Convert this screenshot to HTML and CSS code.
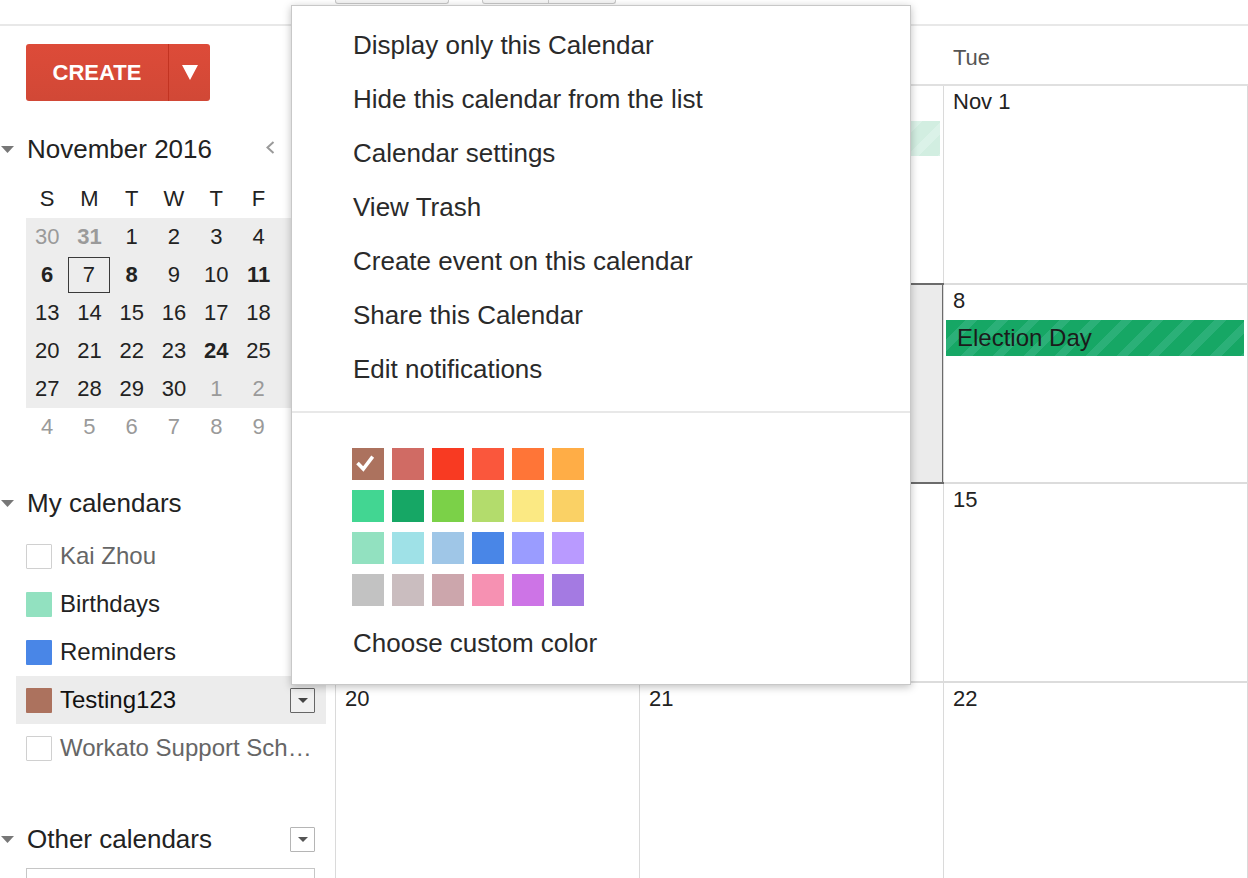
FILE: index.html
```html
<!DOCTYPE html>
<html lang="en">
<head>
<meta charset="utf-8">
<title>Calendar</title>
<link rel="stylesheet" href="styles.css">
</head>
<body>
<div class="app">
  <div class="topbar">
    <div class="tb-btn tb-b1"></div>
    <div class="tb-group"><div class="tb-btn tb-b2"></div><div class="tb-btn tb-b3"></div></div>
  </div>
  <div class="main">
    <aside class="sidebar">
      <div class="create-wrap">
        <div class="create-btn">
          <span class="create-label">CREATE</span>
          <span class="create-arrow"><svg width="16" height="15" viewBox="0 0 16 15"><path d="M0 0H16L8 15Z" fill="#fff"/></svg></span>
        </div>
      </div>

      <div class="minical">
        <div class="sec-head">
          <span class="toggle"><svg width="13" height="7" viewBox="0 0 13 7"><path d="M0 0H13L6.5 7Z" fill="#777"/></svg></span>
          <span class="sec-title">November 2016</span>
          <span class="chev"><svg width="9" height="13" viewBox="0 0 9 13"><polyline points="7.5,1 1.5,6.5 7.5,12" fill="none" stroke="#9a9a9a" stroke-width="2"/></svg></span>
        </div>
        <div class="mc-grid mc-dow">
          <span>S</span><span>M</span><span>T</span><span>W</span><span>T</span><span>F</span><span></span>
        </div>
        <div class="mc-grid mc-month">
          <span class="o">30</span><span class="o b">31</span><span>1</span><span>2</span><span>3</span><span>4</span><span></span>
          <span class="b">6</span><span class="today">7</span><span class="b">8</span><span>9</span><span>10</span><span class="b">11</span><span></span>
          <span>13</span><span>14</span><span>15</span><span>16</span><span>17</span><span>18</span><span></span>
          <span>20</span><span>21</span><span>22</span><span>23</span><span class="b">24</span><span>25</span><span></span>
          <span>27</span><span>28</span><span>29</span><span>30</span><span class="o">1</span><span class="o">2</span><span></span>
        </div>
        <div class="mc-grid mc-next">
          <span class="o">4</span><span class="o">5</span><span class="o">6</span><span class="o">7</span><span class="o">8</span><span class="o">9</span><span></span>
        </div>
      </div>

      <div class="mycal">
        <div class="sec-head">
          <span class="toggle"><svg width="13" height="7" viewBox="0 0 13 7"><path d="M0 0H13L6.5 7Z" fill="#777"/></svg></span>
          <span class="sec-title">My calendars</span>
        </div>
        <div class="cal-list">
          <div class="cal-item off"><span class="swatch empty"></span><span class="cal-name">Kai Zhou</span></div>
          <div class="cal-item"><span class="swatch c-bday"></span><span class="cal-name">Birthdays</span></div>
          <div class="cal-item"><span class="swatch c-rem"></span><span class="cal-name">Reminders</span></div>
          <div class="cal-item active"><span class="swatch c-test"></span><span class="cal-name">Testing123</span>
            <span class="dd dd-dark"><svg width="10" height="5" viewBox="0 0 10 5"><path d="M0 0H10L5 5Z" fill="#444"/></svg></span>
          </div>
          <div class="cal-item off"><span class="swatch empty"></span><span class="cal-name">Workato Support Sch…</span></div>
        </div>
      </div>

      <div class="othercal">
        <div class="sec-head other-head">
          <span class="toggle"><svg width="13" height="7" viewBox="0 0 13 7"><path d="M0 0H13L6.5 7Z" fill="#777"/></svg></span>
          <span class="sec-title">Other calendars</span>
          <span class="dd dd-light"><svg width="10" height="5" viewBox="0 0 10 5"><path d="M0 0H10L5 5Z" fill="#555"/></svg></span>
        </div>
        <div class="add-input"></div>
      </div>
    </aside>

    <section class="calendar">
      <div class="cal-head">
        <div class="hcell"></div><div class="hcell"></div><div class="hcell">Tue</div><div class="hcell"></div>
      </div>
      <div class="week">
        <div class="cell"></div>
        <div class="cell"><div class="date"></div><div class="ev ev-past"></div></div>
        <div class="cell"><div class="date">Nov 1</div></div>
        <div class="cell"></div>
      </div>
      <div class="week">
        <div class="cell"></div>
        <div class="cell today"></div>
        <div class="cell"><div class="date">8</div><div class="ev ev-green">Election Day</div></div>
        <div class="cell"></div>
      </div>
      <div class="week">
        <div class="cell"></div>
        <div class="cell"></div>
        <div class="cell"><div class="date">15</div></div>
        <div class="cell"></div>
      </div>
      <div class="week">
        <div class="cell"><div class="date">20</div></div>
        <div class="cell"><div class="date">21</div></div>
        <div class="cell"><div class="date">22</div></div>
        <div class="cell"></div>
      </div>
    </section>
  </div>

  <div class="popup">
    <ul class="menu">
      <li>Display only this Calendar</li>
      <li>Hide this calendar from the list</li>
      <li>Calendar settings</li>
      <li>View Trash</li>
      <li>Create event on this calendar</li>
      <li>Share this Calendar</li>
      <li>Edit notifications</li>
    </ul>
    <div class="sep"></div>
    <div class="palette">
      <span class="sw sel" style="background:#ac725e"><svg width="32" height="32" viewBox="0 0 32 32"><polyline points="5.5,15 11.3,21 20.7,8.7" fill="none" stroke="#fff" stroke-width="3.6"/></svg></span>
      <span class="sw" style="background:#d06b64"></span>
      <span class="sw" style="background:#f83a22"></span>
      <span class="sw" style="background:#fa573c"></span>
      <span class="sw" style="background:#ff7537"></span>
      <span class="sw" style="background:#ffad46"></span>
      <span class="sw" style="background:#42d692"></span>
      <span class="sw" style="background:#16a765"></span>
      <span class="sw" style="background:#7bd148"></span>
      <span class="sw" style="background:#b3dc6c"></span>
      <span class="sw" style="background:#fbe983"></span>
      <span class="sw" style="background:#fad165"></span>
      <span class="sw" style="background:#92e1c0"></span>
      <span class="sw" style="background:#9fe1e7"></span>
      <span class="sw" style="background:#9fc6e7"></span>
      <span class="sw" style="background:#4986e7"></span>
      <span class="sw" style="background:#9a9cff"></span>
      <span class="sw" style="background:#b99aff"></span>
      <span class="sw" style="background:#c2c2c2"></span>
      <span class="sw" style="background:#cabdbf"></span>
      <span class="sw" style="background:#cca6ac"></span>
      <span class="sw" style="background:#f691b2"></span>
      <span class="sw" style="background:#cd74e6"></span>
      <span class="sw" style="background:#a47ae2"></span>
    </div>
    <div class="custom">Choose custom color</div>
  </div>
</div>
</body>
</html>
```

FILE: styles.css
```css
* { box-sizing: border-box; }

body {
  margin: 0;
  background: #fff;
  color: #222;
  font-family: "Liberation Sans", Arial, Helvetica, sans-serif;
}

.app {
  position: relative;
  width: 1248px;
  height: 878px;
  overflow: hidden;
}

/* top toolbar */
.topbar {
  height: 26px;
  border-bottom: 2px solid #e8e8e8;
  display: flex;
  align-items: flex-start;
  gap: 33px;
  padding-left: 335px;
}
.tb-btn {
  height: 4px;
  border: 1px solid #c8c8c8;
  border-top: none;
  border-radius: 0 0 3px 3px;
  background: #f5f5f5;
}
.tb-b1 { width: 114px; }
.tb-group { display: flex; }
.tb-b2 { width: 67px; border-radius: 0 0 0 3px; }
.tb-b3 { width: 67px; border-left: none; border-radius: 0 0 3px 0; }

.main { display: flex; }

/* sidebar */
.sidebar {
  width: 335px;
  flex: none;
}
.create-wrap { padding: 18px 0 0 26px; }
.create-btn {
  display: flex;
  width: 184px;
  height: 57px;
  border-radius: 3px;
  background: linear-gradient(#dd4b39, #d14836);
  color: #fff;
}
.create-label {
  width: 143px;
  display: flex;
  align-items: center;
  justify-content: center;
  font-weight: bold;
  font-size: 22px;
  border-right: 1px solid #c23321;
}
.create-arrow {
  flex: 1;
  display: flex;
  align-items: center;
  justify-content: center;
}

.sec-head {
  display: flex;
  align-items: center;
  height: 40px;
  font-size: 26px;
  color: #222;
}
.toggle {
  width: 27px;
  flex: none;
  display: flex;
  align-items: center;
  padding-left: 1px;
}
.sec-title { white-space: nowrap; }

.minical { margin-top: 28px; }
.minical .sec-head { width: 291px; }
.chev {
  margin-left: auto;
  margin-right: 16px;
  display: flex;
  margin-top: -4px;
}

.mc-grid {
  margin-left: 26px;
  width: 296px;
  display: grid;
  grid-template-columns: repeat(7, 1fr);
  grid-auto-rows: 38px;
  font-size: 22px;
  color: #222;
}
.mc-grid span {
  display: flex;
  align-items: center;
  justify-content: center;
}
.mc-dow { margin-top: 11px; }
.mc-month { background: #ededed; }
.mc-grid .o { color: #9a9a9a; }
.mc-grid .b { font-weight: bold; }
.mc-grid .today {
  margin: 1px 1px 1px 0;
  box-shadow: inset 0 0 0 1px #3a3a3a;
}

.mycal { margin-top: 37px; }
.cal-list { margin-top: 9px; }
.cal-item {
  display: flex;
  align-items: center;
  gap: 8px;
  margin-left: 16px;
  width: 310px;
  height: 48px;
  padding: 0 11px 0 10px;
  font-size: 24px;
  color: #222;
}
.cal-item.off { color: #666; }
.cal-item.active { background: #ececec; color: #111; }
.cal-name { white-space: nowrap; }
.swatch {
  width: 26px;
  height: 25px;
  flex: none;
  border-radius: 1px;
}
.swatch.empty { background: #fff; border: 1px solid #d0d0d0; }
.c-bday { background: #92e1c0; }
.c-rem { background: #4986e7; }
.c-test { background: #ac725e; }

.dd {
  margin-left: auto;
  width: 25px;
  height: 25px;
  flex: none;
  display: flex;
  align-items: center;
  justify-content: center;
  border-radius: 1px;
}
.dd-dark { border: 1px solid #666; background: #f0f0f0; }
.dd-light { border: 1px solid #b5b5b5; background: #fff; }

.othercal { margin-top: 47px; }
.other-head { width: 326px; padding-right: 11px; }
.add-input {
  margin: 9px 0 0 26px;
  width: 289px;
  height: 30px;
  border: 1px solid #c6c6c6;
}

/* month grid */
.calendar { flex: none; }
.cal-head {
  display: grid;
  grid-template-columns: repeat(4, 304px);
  height: 60px;
  border-bottom: 2px solid #e0e0e0;
}
.hcell {
  padding: 19px 0 0 10px;
  font-size: 22px;
  line-height: 26px;
  color: #555;
}
.week {
  display: grid;
  grid-template-columns: repeat(4, 304px);
  height: 199px;
  border-bottom: 2px solid #dcdcdc;
}
.cell {
  position: relative;
  border-left: 1px solid #dadada;
}
.date {
  height: 31px;
  padding: 1px 0 0 9px;
  line-height: 30px;
  font-size: 22px;
  color: #222;
}
.cell.today { background: #ebebeb; }
.cell.today::after {
  content: "";
  position: absolute;
  left: -1px;
  right: -1px;
  top: -2px;
  bottom: -2px;
  border: 2px solid #6b6b6b;
}
.ev {
  margin: 4px 3px 0 2px;
  height: 36px;
  line-height: 36px;
  padding-left: 11px;
  font-size: 24px;
  white-space: nowrap;
}
.ev-green {
  color: #1b1b1b;
  background: repeating-linear-gradient(135deg, #16a765 0 14px, #2bb078 14px 22px);
}
.ev-past {
  height: 35px;
  background: repeating-linear-gradient(135deg, #d2eee1 0 14px, #dbf2e8 14px 22px);
}

/* popup menu */
.popup {
  position: absolute;
  left: 291px;
  top: 5px;
  width: 620px;
  height: 680px;
  background: #fff;
  border: 1px solid #c8c8c8;
  box-shadow: 0 2px 8px rgba(0, 0, 0, 0.25);
}
.menu {
  list-style: none;
  margin: 0;
  padding: 12px 0 0 0;
}
.menu li {
  height: 54px;
  line-height: 54px;
  padding-left: 61px;
  font-size: 26px;
  color: #2a2a2a;
  white-space: nowrap;
}
.sep {
  margin-top: 15px;
  height: 2px;
  background: #e8e8e8;
}
.palette {
  margin: 35px 0 0 60px;
  display: grid;
  grid-template-columns: repeat(6, 32px);
  grid-auto-rows: 32px;
  column-gap: 8px;
  row-gap: 10px;
}
.sw { display: block; }
.sw svg { display: block; }
.custom {
  margin-top: 10px;
  height: 54px;
  line-height: 54px;
  padding-left: 61px;
  font-size: 26px;
  color: #2a2a2a;
}
```
